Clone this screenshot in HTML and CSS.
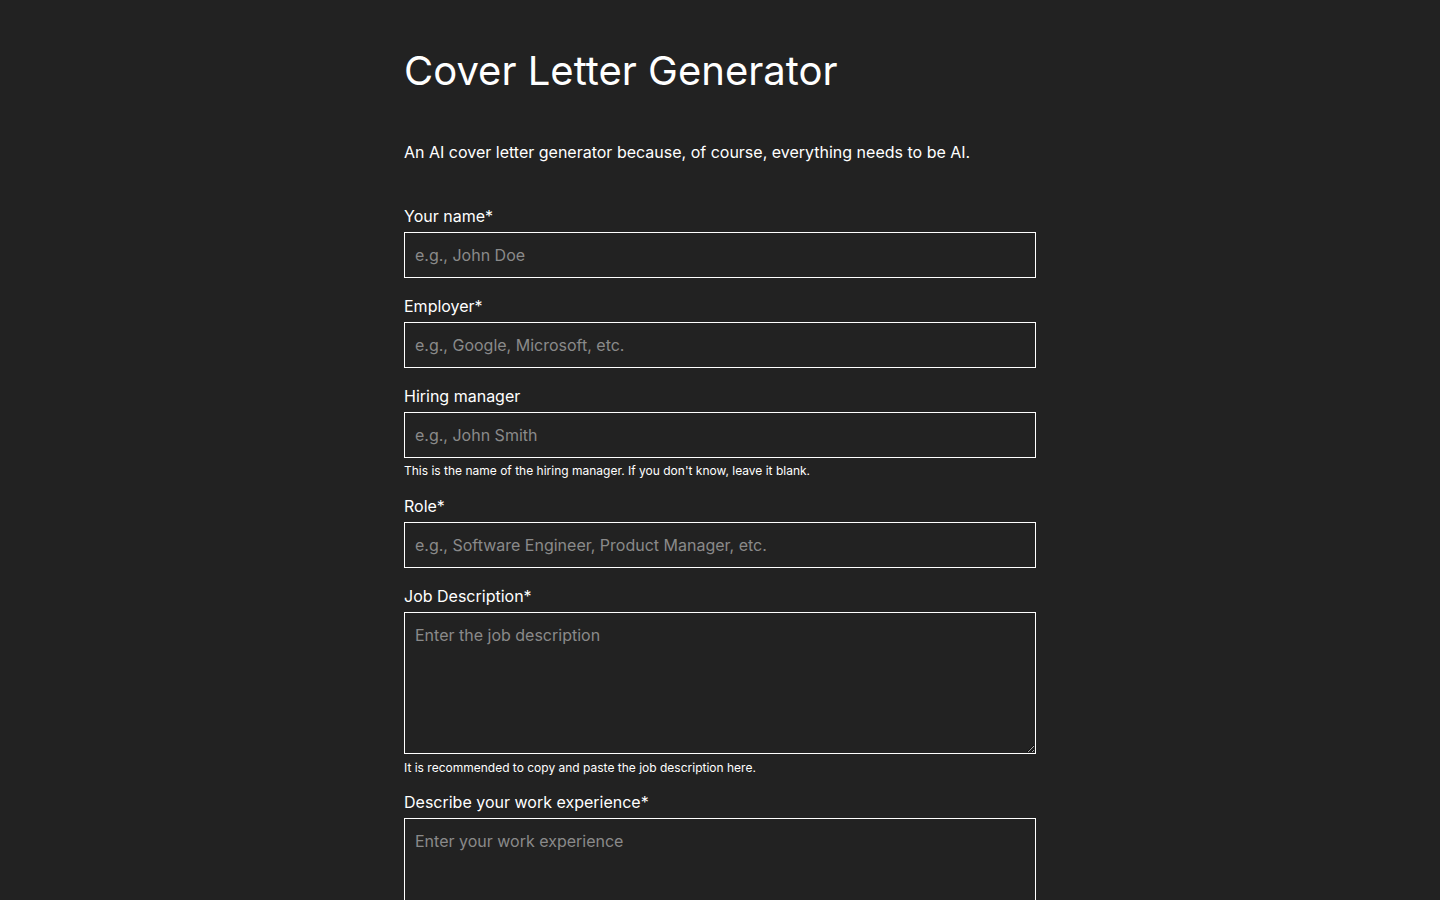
FILE: index.html
```html
<!DOCTYPE html>
<html lang="en">
<head>
<meta charset="utf-8">
<title>Cover Letter Generator</title>
<link rel="stylesheet" href="styles.css">
</head>
<body>
<main class="page">
  <h1 class="title">Cover Letter Generator</h1>
  <p class="intro">An AI cover letter generator because, of course, everything needs to be AI.</p>
  <form class="form">
    <div class="field">
      <label class="label" for="name">Your name*</label>
      <input class="input" id="name" type="text" placeholder="e.g., John Doe">
    </div>
    <div class="field">
      <label class="label" for="employer">Employer*</label>
      <input class="input" id="employer" type="text" placeholder="e.g., Google, Microsoft, etc.">
    </div>
    <div class="field">
      <label class="label" for="manager">Hiring manager</label>
      <input class="input" id="manager" type="text" placeholder="e.g., John Smith">
      <p class="help">This is the name of the hiring manager. If you don't know, leave it blank.</p>
    </div>
    <div class="field">
      <label class="label" for="role">Role*</label>
      <input class="input" id="role" type="text" placeholder="e.g., Software Engineer, Product Manager, etc.">
    </div>
    <div class="field">
      <label class="label" for="jd">Job Description*</label>
      <textarea class="input textarea" id="jd" placeholder="Enter the job description"></textarea>
      <p class="help help-after-area">It is recommended to copy and paste the job description here.</p>
    </div>
    <div class="field">
      <label class="label" for="exp">Describe your work experience*</label>
      <textarea class="input textarea" id="exp" placeholder="Enter your work experience"></textarea>
    </div>
  </form>
</main>
</body>
</html>
```
FILE: styles.css
```css
html, body {
  margin: 0;
  padding: 0;
  background: #222222;
  color: #ffffff;
  font-family: Inter, "Noto Sans", sans-serif;
}
.page {
  width: 632px;
  margin: 0 auto;
  padding-top: 47px;
  padding-bottom: 40px;
}
.title {
  margin: 0;
  font-size: 40px;
  line-height: 48px;
  font-weight: 400;
  letter-spacing: 0;
}
.intro {
  margin: 45px 0 40px;
  font-size: 16px;
  line-height: 24px;
}
.form {
  display: flex;
  flex-direction: column;
  gap: 16px;
}
.field {
  display: flex;
  flex-direction: column;
  gap: 4px;
}
.label {
  font-size: 16px;
  line-height: 24px;
}
.input {
  box-sizing: border-box;
  width: 100%;
  height: 46px;
  margin: 0;
  padding: 10px;
  background: #222222;
  border: 1px solid #ffffff;
  border-radius: 0;
  color: #ffffff;
  color-scheme: dark;
  font-family: Inter, "Noto Sans", sans-serif;
  font-size: 16px;
  line-height: 24px;
  outline: none;
}
.input::placeholder {
  color: #8a8a8a;
  opacity: 1;
}
.textarea {
  height: 142px;
  display: block;
  resize: vertical;
}
.help {
  margin: 1px 0 -1px;
  font-size: 12px;
  line-height: 16px;
}
.help-after-area {
  margin: 2px 0 -2px;
}
```
